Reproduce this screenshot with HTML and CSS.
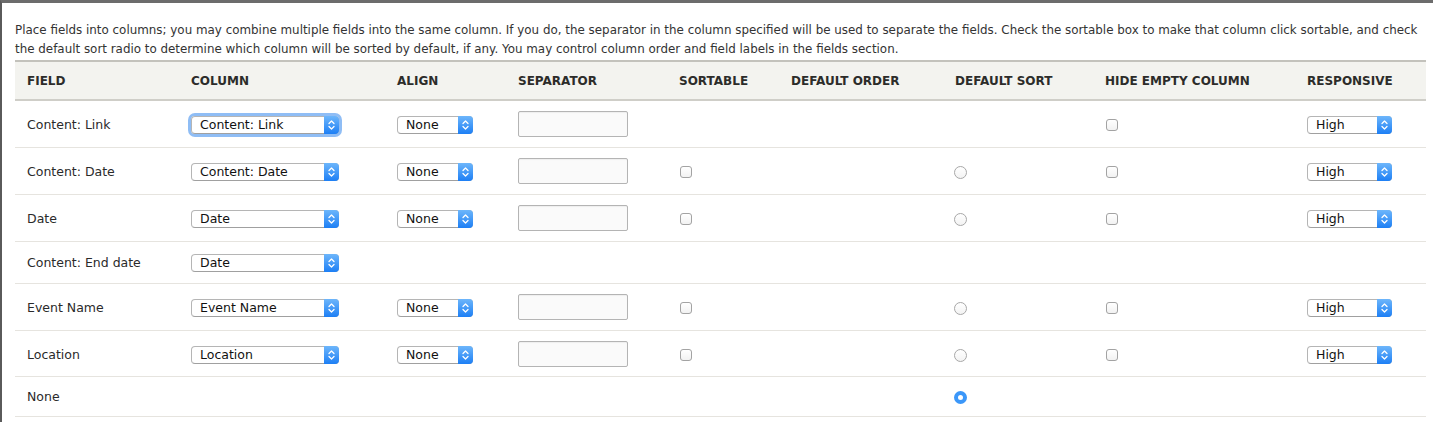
FILE: index.html
```html
<!DOCTYPE html>
<html lang="en">
<head>
<meta charset="utf-8">
<title>Table settings</title>
<link rel="stylesheet" href="styles.css">
</head>
<body>
<div class="frame">
  <p class="description">Place fields into columns; you may combine multiple fields into the same column. If you do, the separator in the column specified will be used to separate the fields. Check the sortable box to make that column click sortable, and check the default sort radio to determine which column will be sorted by default, if any. You may control column order and field labels in the fields section.</p>
  <table class="style-table">
    <colgroup>
      <col class="c-field"><col class="c-column"><col class="c-align"><col class="c-sep"><col class="c-sortable"><col class="c-order"><col class="c-dsort"><col class="c-hide"><col class="c-resp">
    </colgroup>
    <thead>
      <tr>
        <th>Field</th><th>Column</th><th>Align</th><th>Separator</th><th>Sortable</th><th>Default order</th><th>Default sort</th><th>Hide empty column</th><th>Responsive</th>
      </tr>
    </thead>
    <tbody>
      <tr>
        <td>Content: Link</td>
        <td><span class="sel sel-col focused"><select><option>Content: Link</option></select><svg class="arrow" viewBox="0 0 15 18"><path d="M5 7.5 L7.5 5 L10 7.5 M5 10.5 L7.5 13 L10 10.5"/></svg></span></td>
        <td><span class="sel sel-align"><select><option>None</option></select><svg class="arrow" viewBox="0 0 15 18"><path d="M5 7.5 L7.5 5 L10 7.5 M5 10.5 L7.5 13 L10 10.5"/></svg></span></td>
        <td><input class="text" type="text"></td>
        <td></td>
        <td></td>
        <td></td>
        <td><span class="check"></span></td>
        <td><span class="sel sel-resp"><select><option>High</option></select><svg class="arrow" viewBox="0 0 15 18"><path d="M5 7.5 L7.5 5 L10 7.5 M5 10.5 L7.5 13 L10 10.5"/></svg></span></td>
      </tr>
      <tr>
        <td>Content: Date</td>
        <td><span class="sel sel-col"><select><option>Content: Date</option></select><svg class="arrow" viewBox="0 0 15 18"><path d="M5 7.5 L7.5 5 L10 7.5 M5 10.5 L7.5 13 L10 10.5"/></svg></span></td>
        <td><span class="sel sel-align"><select><option>None</option></select><svg class="arrow" viewBox="0 0 15 18"><path d="M5 7.5 L7.5 5 L10 7.5 M5 10.5 L7.5 13 L10 10.5"/></svg></span></td>
        <td><input class="text" type="text"></td>
        <td><span class="check"></span></td>
        <td></td>
        <td><span class="radio"></span></td>
        <td><span class="check"></span></td>
        <td><span class="sel sel-resp"><select><option>High</option></select><svg class="arrow" viewBox="0 0 15 18"><path d="M5 7.5 L7.5 5 L10 7.5 M5 10.5 L7.5 13 L10 10.5"/></svg></span></td>
      </tr>
      <tr>
        <td>Date</td>
        <td><span class="sel sel-col"><select><option>Date</option></select><svg class="arrow" viewBox="0 0 15 18"><path d="M5 7.5 L7.5 5 L10 7.5 M5 10.5 L7.5 13 L10 10.5"/></svg></span></td>
        <td><span class="sel sel-align"><select><option>None</option></select><svg class="arrow" viewBox="0 0 15 18"><path d="M5 7.5 L7.5 5 L10 7.5 M5 10.5 L7.5 13 L10 10.5"/></svg></span></td>
        <td><input class="text" type="text"></td>
        <td><span class="check"></span></td>
        <td></td>
        <td><span class="radio"></span></td>
        <td><span class="check"></span></td>
        <td><span class="sel sel-resp"><select><option>High</option></select><svg class="arrow" viewBox="0 0 15 18"><path d="M5 7.5 L7.5 5 L10 7.5 M5 10.5 L7.5 13 L10 10.5"/></svg></span></td>
      </tr>
      <tr class="short">
        <td>Content: End date</td>
        <td><span class="sel sel-col"><select><option>Date</option></select><svg class="arrow" viewBox="0 0 15 18"><path d="M5 7.5 L7.5 5 L10 7.5 M5 10.5 L7.5 13 L10 10.5"/></svg></span></td>
        <td></td><td></td><td></td><td></td><td></td><td></td><td></td>
      </tr>
      <tr>
        <td>Event Name</td>
        <td><span class="sel sel-col"><select><option>Event Name</option></select><svg class="arrow" viewBox="0 0 15 18"><path d="M5 7.5 L7.5 5 L10 7.5 M5 10.5 L7.5 13 L10 10.5"/></svg></span></td>
        <td><span class="sel sel-align"><select><option>None</option></select><svg class="arrow" viewBox="0 0 15 18"><path d="M5 7.5 L7.5 5 L10 7.5 M5 10.5 L7.5 13 L10 10.5"/></svg></span></td>
        <td><input class="text" type="text"></td>
        <td><span class="check"></span></td>
        <td></td>
        <td><span class="radio"></span></td>
        <td><span class="check"></span></td>
        <td><span class="sel sel-resp"><select><option>High</option></select><svg class="arrow" viewBox="0 0 15 18"><path d="M5 7.5 L7.5 5 L10 7.5 M5 10.5 L7.5 13 L10 10.5"/></svg></span></td>
      </tr>
      <tr class="loc">
        <td>Location</td>
        <td><span class="sel sel-col"><select><option>Location</option></select><svg class="arrow" viewBox="0 0 15 18"><path d="M5 7.5 L7.5 5 L10 7.5 M5 10.5 L7.5 13 L10 10.5"/></svg></span></td>
        <td><span class="sel sel-align"><select><option>None</option></select><svg class="arrow" viewBox="0 0 15 18"><path d="M5 7.5 L7.5 5 L10 7.5 M5 10.5 L7.5 13 L10 10.5"/></svg></span></td>
        <td><input class="text" type="text"></td>
        <td><span class="check"></span></td>
        <td></td>
        <td><span class="radio"></span></td>
        <td><span class="check"></span></td>
        <td><span class="sel sel-resp"><select><option>High</option></select><svg class="arrow" viewBox="0 0 15 18"><path d="M5 7.5 L7.5 5 L10 7.5 M5 10.5 L7.5 13 L10 10.5"/></svg></span></td>
      </tr>
      <tr class="none-row">
        <td>None</td>
        <td></td><td></td><td></td><td></td><td></td>
        <td><span class="radio checked"></span></td>
        <td></td><td></td>
      </tr>
    </tbody>
  </table>
</div>
</body>
</html>
```

FILE: styles.css
```css
html, body {
  margin: 0;
  padding: 0;
  background: #fff;
}

body {
  font-family: "DejaVu Sans", Verdana, sans-serif;
  color: #333;
  font-size: 12px;
}

.frame {
  border-top: 3px solid #6c6c6c;
  border-left: 2px solid #5a5a5a;
  padding: 18px 7px 0 13px;
  min-height: 422px;
  box-sizing: border-box;
}

.description {
  margin: 0 0 1px;
  font-size: 11.9px;
  line-height: 19px;
  color: #333;
}

.style-table {
  width: 1411px;
  table-layout: fixed;
  border-collapse: collapse;
}

.c-field { width: 164px; }
.c-column { width: 206px; }
.c-align { width: 121px; }
.c-sep { width: 161px; }
.c-sortable { width: 112px; }
.c-order { width: 164px; }
.c-dsort { width: 150px; }
.c-hide { width: 202px; }
.c-resp { width: 131px; }

.style-table th {
  background: #f3f3ef;
  border-top: 2px solid #c3c2bc;
  border-bottom: 2px solid #cfcec8;
  text-align: left;
  text-transform: uppercase;
  font-weight: bold;
  font-size: 12px;
  color: #2c2c2a;
  padding: 0 12px;
  height: 37px;
}

.style-table td {
  border-bottom: 1px solid #e6e4df;
  padding: 10px 12px;
  height: 26px;
  line-height: 19px;
  vertical-align: middle;
  font-size: 12.5px;
  color: #2a2a2a;
  white-space: nowrap;
}

.style-table tr.short td { height: 21px; }
.style-table tr.loc td { padding-bottom: 9px; }
.style-table tr.none-row td { height: 19px; }

.sel {
  position: relative;
  display: inline-block;
  vertical-align: middle;
  height: 18px;
  border-radius: 4px;
}

.sel select {
  -webkit-appearance: none;
  appearance: none;
  display: block;
  height: 18px;
  width: 100%;
  box-sizing: border-box;
  margin: 0;
  padding: 0 18px 0 8px;
  border: 1px solid #b5b5b5;
  border-bottom-color: #a0a0a0;
  border-radius: 4px;
  background: #fff;
  font-family: "DejaVu Sans", Verdana, sans-serif;
  font-size: 12.5px;
  line-height: 16px;
  color: #111;
}

.sel .arrow {
  position: absolute;
  right: 0;
  top: 0;
  width: 15px;
  height: 18px;
  border-radius: 0 4px 4px 0;
  background: linear-gradient(#6db6fb, #1d7ff5);
  pointer-events: none;
}

.sel .arrow path {
  fill: none;
  stroke: #fff;
  stroke-width: 1.3;
  stroke-linecap: round;
  stroke-linejoin: round;
}

.sel-col { width: 148px; }
.sel-align { width: 76px; }
.sel-resp { width: 85px; }

.sel.focused {
  box-shadow: 0 0 0 3px #8fbdf5;
}

.text {
  display: block;
  box-sizing: border-box;
  width: 110px;
  height: 26px;
  margin: 0;
  border: 1px solid #b4b4b4;
  border-radius: 2px;
  background: #fafafa;
  box-shadow: inset 0 1px 1px rgba(0,0,0,0.05);
}

.check {
  display: inline-block;
  vertical-align: middle;
  box-sizing: border-box;
  width: 12px;
  height: 12px;
  margin-left: 1px;
  border: 1px solid #a3a3a3;
  border-radius: 3px;
  background: linear-gradient(#fff, #f2f2f2);
}

.radio {
  display: inline-block;
  vertical-align: middle;
  box-sizing: border-box;
  width: 13px;
  height: 13px;
  margin-left: -1px;
  border: 1px solid #a8a8a8;
  border-radius: 50%;
  background: linear-gradient(#fff, #f3f3f3);
}

.radio.checked {
  border: 4.5px solid #3b97f9;
  background: #fff;
}
```
